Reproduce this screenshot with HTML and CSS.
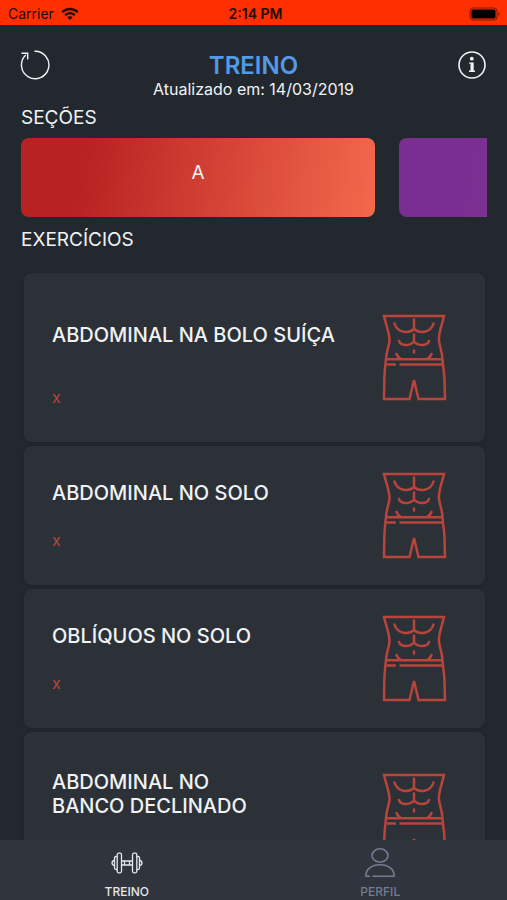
FILE: index.html
```html
<!DOCTYPE html>
<html lang="pt-BR">
<head>
<meta charset="utf-8">
<meta name="viewport" content="width=device-width, initial-scale=1">
<title>Treino</title>
<link rel="stylesheet" href="styles.css">
</head>
<body>
<svg class="sprite" aria-hidden="true">
  <symbol id="abs" viewBox="0 0 65 90">
    <g fill="none" stroke="currentColor" stroke-width="2.5" stroke-linecap="round" stroke-linejoin="miter">
      <path d="M2 3H62C60 12 56 21 57 28C58 35 60 38 60.500 46C60.800 53 62.500 60 62.500 68L63 86H36.500L32 67L27.500 86H2L2.300 68C2.300 60 3.300 53 4 46C4.500 38 6.500 35 7.500 28C8 21 4 12 2 3Z"/>
      <path d="M4.500 46.200H60.500M4.500 51.500H14M17.500 51.500H60.500" stroke-linecap="butt"/>
      <path d="M32 6.500V16M12.500 10.500C15.500 20.500 27 20.500 32 16C37 20.500 48.500 20.500 51.500 10.500"/>
      <path d="M32 21.500V28.500M17 28C19 33.500 28 33 32 28.500C36 33 45 33.500 47 28"/>
      <path d="M32 37.500V39.500M14.500 41Q15.500 44 18.500 45.500M49.500 41Q48.500 44 45.500 45.500"/>
    </g>
  </symbol>
</svg>

<div class="status">
  <span class="carrier">Carrier
    <svg width="18" height="14" viewBox="0 0 18 14" fill="none" stroke="currentColor" stroke-width="2.300" aria-hidden="true">
      <path d="M1.200 5.200C5.500.9 12.500.9 16.800 5.200M4.200 8.200C7 5.600 11 5.600 13.800 8.200"/>
      <path d="M9 13L6.300 10.300C7.800 8.900 10.200 8.900 11.700 10.300Z" fill="currentColor" stroke="none"/>
    </svg>
  </span>
  <span class="time">2:14 PM</span>
  <svg class="battery" width="32" height="14" viewBox="0 0 32 14" aria-hidden="true">
    <rect x="1" y="1" width="27" height="12" rx="3" fill="none" stroke="currentColor" stroke-opacity=".5"/>
    <rect x="2.500" y="2.500" width="24" height="9" rx="1.500" fill="currentColor"/>
    <path d="M29.500 5V9C31 8.500 31 5.500 29.500 5Z" fill="currentColor" fill-opacity=".5"/>
  </svg>
</div>

<header class="header">
  <button class="icon-button" type="button" aria-label="Atualizar">
    <svg width="30" height="30" viewBox="0 0 30 30" fill="none" stroke="currentColor" stroke-width="1.400" aria-hidden="true">
      <path d="M14.500 1.300A13.700 13.700 0 1 1 5.800 5"/>
      <path d="M1.500 3.300H7.700V9.500"/>
    </svg>
  </button>
  <div class="heading">
    <h1>TREINO</h1>
    <p>Atualizado em: 14/03/2019</p>
  </div>
  <button class="icon-button" type="button" aria-label="Informações">
    <svg width="30" height="30" viewBox="0 0 30 30" fill="none" stroke="currentColor" aria-hidden="true">
      <circle cx="15" cy="15" r="13" stroke-width="1.600"/>
      <circle cx="14.800" cy="8.700" r="1.900" fill="currentColor" stroke="none"/>
      <path d="M12.200 12.400H16.700V20.600H18V22H12V20.600H13.500V13.800H12.200Z" fill="currentColor" stroke="none"/>
    </svg>
  </button>
</header>

<main class="content">
  <h2>SEÇÕES</h2>
  <div class="sections">
    <button class="section section-a" type="button">A</button>
    <button class="section section-b" type="button" aria-label="B"></button>
  </div>
  <h2>EXERCÍCIOS</h2>
  <ul class="exercises">
    <li class="card tall">
      <div class="info"><h3>ABDOMINAL NA BOLO SUÍÇA</h3><p>x</p></div>
      <svg class="figure" aria-hidden="true"><use href="#abs"/></svg>
    </li>
    <li class="card">
      <div class="info"><h3>ABDOMINAL NO SOLO</h3><p>x</p></div>
      <svg class="figure" aria-hidden="true"><use href="#abs"/></svg>
    </li>
    <li class="card">
      <div class="info"><h3>OBLÍQUOS NO SOLO</h3><p>x</p></div>
      <svg class="figure" aria-hidden="true"><use href="#abs"/></svg>
    </li>
    <li class="card tall">
      <div class="info"><h3>ABDOMINAL NO<br>BANCO DECLINADO</h3></div>
      <svg class="figure" aria-hidden="true"><use href="#abs"/></svg>
    </li>
  </ul>
</main>

<nav class="tabs">
  <a class="tab active" href="#treino">
    <svg width="32" height="30" viewBox="0 0 32 30" fill="none" stroke="currentColor" stroke-width="1.300" aria-hidden="true">
      <rect x="6.200" y="5.200" width="4.300" height="19.600" rx="1.500"/>
      <rect x="21.500" y="5.200" width="4.300" height="19.600" rx="1.500"/>
      <path d="M6.200 8.500H5C4 8.500 3.500 9 3.500 10V20C3.500 21 4 21.500 5 21.500H6.200M25.800 8.500H27C28 8.500 28.500 9 28.500 10V20C28.500 21 28 21.500 27 21.500H25.800"/>
      <path d="M3.500 12.500C.2 13 .2 17 3.500 17.500M28.500 12.500C31.800 13 31.800 17 28.500 17.500M10.500 13H21.500M10.500 17H21.500M13.500 13V17M18.500 13V17"/>
    </svg>
    <span>TREINO</span>
  </a>
  <a class="tab" href="#perfil">
    <svg width="32" height="30" viewBox="0 0 32 30" fill="none" stroke="currentColor" stroke-width="1.600" aria-hidden="true">
      <ellipse cx="16" cy="7.500" rx="8" ry="6.700"/>
      <path d="M6 28.200H2C1.500 21.500 7.500 16.800 16 16.800S30.500 21.500 30 28.200H8.500"/>
    </svg>
    <span>PERFIL</span>
  </a>
</nav>
</body>
</html>
```

FILE: styles.css
```css
* {
  box-sizing: border-box;
}

body {
  margin: 0;
  height: 100vh;
  display: flex;
  flex-direction: column;
  overflow: hidden;
  background: #23282f;
  color: #f0f3f5;
  font-family: Inter, "Liberation Sans", sans-serif;
}

h1, h2, h3, p, ul {
  margin: 0;
  padding: 0;
}

button {
  padding: 0;
  border: 0;
  background: none;
  color: inherit;
  font: inherit;
}

.sprite {
  display: none;
}

.status {
  flex: none;
  display: grid;
  grid-template-columns: 1fr auto 1fr;
  align-items: center;
  height: 25px;
  padding: 2px 6px 0 8px;
  background: #ff2f00;
  color: #240b04;
  font-size: 14px;
  line-height: 20px;
}

.carrier {
  display: flex;
  align-items: center;
  gap: 7px;
}

.time {
  padding-left: 2px;
  font-weight: 600;
}

.battery {
  justify-self: end;
  color: #000;
}

.header {
  flex: none;
  display: flex;
  align-items: flex-start;
  justify-content: space-between;
  padding: 25px 20px 0;
}

.icon-button {
  display: block;
  height: 30px;
}

.icon-button svg {
  display: block;
}

.heading {
  padding-top: 2px;
  text-align: center;
}

.heading h1 {
  color: #539ae6;
  font-size: 24px;
  font-weight: 600;
  line-height: 28px;
}

.heading p {
  font-size: 16px;
  line-height: 18px;
}

.content {
  flex: 1;
  min-height: 0;
  overflow: hidden;
  padding: 8px 20px 0 21px;
}

.content h2 {
  font-size: 19px;
  font-weight: 400;
  line-height: 24px;
}

.sections {
  display: flex;
  gap: 24px;
  overflow: hidden;
  margin: 8px 0 11px;
}

.section {
  flex: none;
  width: 76%;
  height: 79px;
  padding-bottom: 10px;
  border-radius: 8px;
  font-size: 19px;
}

.section-a {
  background: linear-gradient(100deg, #b82222 18%, #f3694c);
}

.section-b {
  background: linear-gradient(100deg, #7b2e91 20%, #a04cae);
}

.exercises {
  display: flex;
  flex-direction: column;
  gap: 4px;
  margin-top: 21px;
  padding: 0 2px 0 3px;
  list-style: none;
}

.card {
  display: flex;
  align-items: center;
  justify-content: space-between;
  padding: 35px 38px 34px 28px;
  border-radius: 8px;
  background: #2c3137;
  box-shadow: 0 2px 3px #1f2428;
}

.card h3 {
  display: flex;
  align-items: center;
  min-height: 24px;
  font-size: 20px;
  font-weight: 500;
  line-height: 24px;
}

.tall .info {
  min-height: 100px;
}

.tall h3 {
  min-height: 54px;
}

.card p {
  margin-top: 26px;
  color: #b8453d;
  font-size: 16px;
  line-height: 18px;
  padding-bottom: 2px;
}

.figure {
  flex: none;
  width: 65px;
  height: 90px;
  margin: -10px 0;
  color: #b8443c;
}

.tabs {
  flex: none;
  display: flex;
  height: 60px;
  background: #30353d;
}

.tab {
  flex: 1;
  display: flex;
  flex-direction: column;
  align-items: center;
  padding-top: 8px;
  color: #747c93;
  font-size: 12px;
  font-weight: 500;
  line-height: 16px;
  text-decoration: none;
}

.tab span {
  margin-top: 6px;
}

.active {
  color: #e4e7ea;
}
```
